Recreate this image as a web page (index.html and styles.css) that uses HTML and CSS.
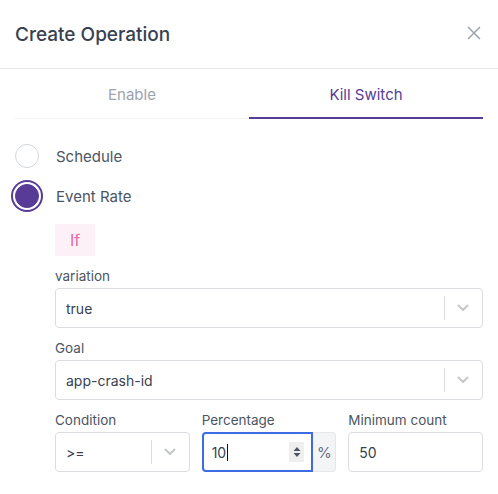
FILE: index.html
```html
<!DOCTYPE html>
<html>
<head>
<meta charset="utf-8">
<link rel="stylesheet" href="styles.css">
</head>
<body>
<div class="modal">
  <div class="header">
    <h1 class="title">Create Operation</h1>
    <svg class="close" width="14" height="14" viewBox="0 0 14 14"><path d="M1 1L13 13M13 1L1 13" stroke="#9ca3af" stroke-width="1.5" fill="none"/></svg>
  </div>
  <div class="tabs">
    <div class="tab">Enable</div>
    <div class="tab active">Kill Switch</div>
  </div>
  <div class="content">
    <div class="radio-row">
      <span class="radio"></span>
      <span class="radio-label">Schedule</span>
    </div>
    <div class="radio-row">
      <span class="radio checked"></span>
      <span class="radio-label">Event Rate</span>
    </div>
    <div class="rule">
      <div class="badge">If</div>
      <div class="field">
        <div class="label">variation</div>
        <div class="select">
          <span class="value">true</span>
          <span class="sep"></span>
          <svg class="chev" width="12" height="8" viewBox="0 0 12 8"><path d="M1.5 1.5L6 6L10.5 1.5" stroke="#c4c7cc" stroke-width="2" fill="none" stroke-linecap="round" stroke-linejoin="round"/></svg>
        </div>
      </div>
      <div class="field">
        <div class="label">Goal</div>
        <div class="select">
          <span class="value">app-crash-id</span>
          <span class="sep"></span>
          <svg class="chev" width="12" height="8" viewBox="0 0 12 8"><path d="M1.5 1.5L6 6L10.5 1.5" stroke="#c4c7cc" stroke-width="2" fill="none" stroke-linecap="round" stroke-linejoin="round"/></svg>
        </div>
      </div>
      <div class="field grid3">
        <div>
          <div class="label">Condition</div>
          <div class="select">
            <span class="value">&gt;=</span>
            <span class="sep"></span>
            <svg class="chev" width="12" height="8" viewBox="0 0 12 8"><path d="M1.5 1.5L6 6L10.5 1.5" stroke="#c4c7cc" stroke-width="2" fill="none" stroke-linecap="round" stroke-linejoin="round"/></svg>
          </div>
        </div>
        <div>
          <div class="label">Percentage</div>
          <div class="group">
            <div class="num">
              <span class="value">10<span class="caret"></span></span>
              <span class="spin">
                <svg width="8" height="12" viewBox="0 0 8 12"><path d="M4 1L7.5 5H0.5Z M4 11L7.5 7H0.5Z" fill="#4b5563"/></svg>
              </span>
            </div>
            <div class="addon">%</div>
          </div>
        </div>
        <div>
          <div class="label">Minimum count</div>
          <div class="input"><span class="value">50</span></div>
        </div>
      </div>
    </div>
  </div>
</div>
</body>
</html>
```

FILE: styles.css
```css
* { box-sizing: border-box; }
html, body { margin: 0; padding: 0; background: #fff; }
body { font-family: Inter, "Noto Sans", sans-serif; color: #374151; }
.modal { width: 498px; }
.header {
  height: 69px;
  padding: 0 17px 0 15px;
  display: flex;
  align-items: center;
  justify-content: space-between;
  border-bottom: 1px solid #e5e7eb;
}
.title { margin: 0; font-size: 19px; font-weight: 500; color: #374151; }
.close { margin-top: -2px; }
.tabs {
  margin: 0 15px;
  display: grid;
  grid-template-columns: 1fr 1fr;
  height: 50px;
  border-bottom: 1px solid #f0f1f3;
}
.tab {
  display: flex;
  align-items: center;
  justify-content: center;
  font-size: 15px;
  color: #9ca3af;
  padding-top: 1px;
}
.tab.active {
  color: #573b97;
  border-bottom: 2px solid #573b97;
  margin-bottom: -1px;
  padding-top: 2px;
}
.content { padding: 17px 15px 0 15px; }
.radio-row { height: 40px; display: flex; align-items: center; gap: 17px; }
.radio {
  width: 24px; height: 24px; border-radius: 50%;
  border: 1px solid #d1d5db; background: #fff;
  flex: none;
}
.radio.checked {
  background: #573b97;
  border-color: #573b97;
  box-shadow: 0 0 0 2px #fff, 0 0 0 4px #573b97;
}
.radio-label { font-size: 15px; color: #4b5563; }
.rule { padding-left: 40px; padding-top: 8px; }
.badge {
  width: 40px; height: 32px;
  background: #fdf0f7;
  color: #e66aa8;
  font-size: 16px;
  display: flex; align-items: center; justify-content: center;
}
.field { margin-top: 10px; }
.label { font-size: 13.5px; line-height: 20px; color: #4b5563; margin-bottom: 2px; }
.select, .input {
  height: 40px;
  border: 1px solid #d9dce1;
  border-radius: 4px;
  display: flex;
  align-items: center;
  padding-left: 10px;
  font-size: 14px;
  color: #374151;
}
.select .value { flex: 1; }
.sep { width: 1px; height: 24px; background: #d9dce1; }
.chev { margin: 0 13px 0 12px; }
.grid3 { display: grid; grid-template-columns: 1fr 1fr 1fr; gap: 12px; }
.group { display: flex; height: 40px; }
.num {
  flex: 1;
  border: 2px solid #3b6ce6;
  border-radius: 4px 0 0 4px;
  display: flex; align-items: center;
  padding-left: 8px; padding-right: 7px;
  font-size: 14px;
}
.num .value { flex: 1; display: flex; align-items: center; }
.caret { display: inline-block; width: 1px; height: 17px; background: #111; margin-left: 1px; }
.spin {
  width: 15px; height: 20px; background: #efefef;
  display: flex; align-items: center; justify-content: center;
}
.addon {
  width: 23px;
  background: #f3f4f6;
  border: 1px solid #e5e7eb;
  border-left: none;
  border-radius: 0 4px 4px 0;
  display: flex; align-items: center; justify-content: center;
  font-size: 15px; color: #6b7280;
}
```
